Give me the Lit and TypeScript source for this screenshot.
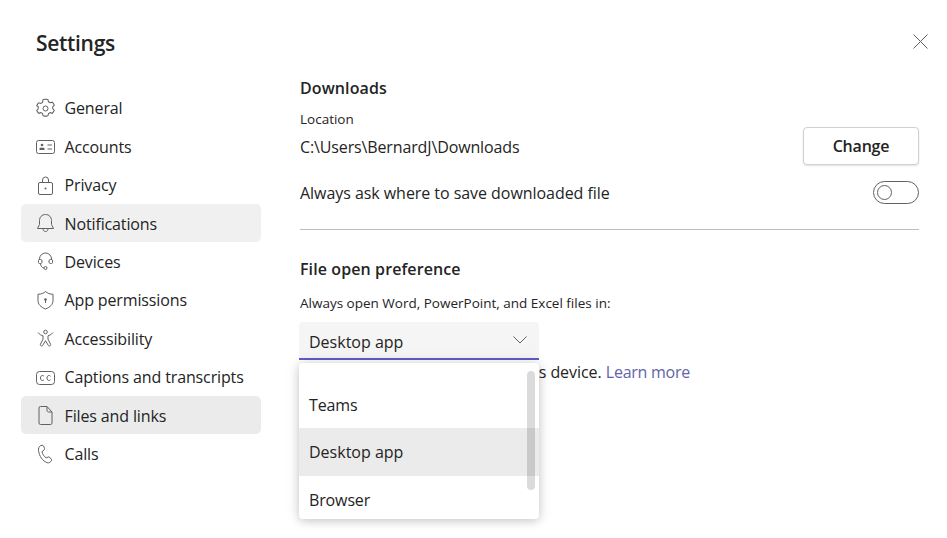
import { LitElement, html, css, svg } from "lit";
import { customElement } from "lit/decorators.js";

const navItems = [
  { label: "General", icon: svg`<path d="M8.6 2.6 10 2.2h1.900l1.400.4.500 2 1.600.9 2-.6 1.100 1.300.8 1.500-1.400 1.500v2l1.400 1.400-.8 1.600-1.100 1.300-2-.6-1.600.9-.5 2-1.400.4H10l-1.400-.4-.5-2-1.600-.9-2 .6-1.100-1.300-.8-1.600 1.400-1.400v-2L2.600 8.300l.8-1.500 1.100-1.300 2 .6 1.600-.9z" transform="translate(-1 -1) scale(1.05)"/><circle cx="10.500" cy="10.500" r="2.500"/>` },
  { label: "Accounts", icon: svg`<rect x="1.500" y="4.500" width="18" height="13" rx="2"/><circle cx="7" cy="9" r="1.300" fill="#616161" stroke="none"/><path d="M4.500 14v-1.200c0-.6.400-1 1-1h3c.6 0 1 .4 1 1V14z" fill="#616161" stroke="none"/><path d="M12.500 9h4.500M12.500 13h4.500"/>` },
  { label: "Privacy", icon: svg`<rect x="3.500" y="7.500" width="14" height="12" rx="1.500"/><path d="M7.500 7.500V5a3 3 0 0 1 6 0v2.500"/><circle cx="10.500" cy="13.500" r="1" fill="#616161" stroke="none"/>` },
  { label: "Notifications", icon: svg`<path d="M10.500 1.500c-3.500 0-6 2.700-6 6v4l-2 4h16l-2-4v-4c0-3.300-2.500-6-6-6z"/><path d="M8 15.500c0 1.800 1 3 2.500 3s2.500-1.200 2.500-3"/>` },
  { label: "Devices", icon: svg`<path d="M4.500 9V8a6 6 0 0 1 12 0v1"/><path d="M4.500 8.500h1.200c.7 0 1.300.6 1.300 1.300v1.400c0 .7-.6 1.300-1.300 1.300H4.500c-.6 0-1-.4-1-1v-2c0-.6.400-1 1-1zM15.300 8.500h1.200c.6 0 1 .4 1 1v2c0 .6-.4 1-1 1h-1.200c-.7 0-1.300-.6-1.300-1.300V9.800c0-.7.600-1.300 1.300-1.300z"/><path d="M5.500 12.500c0 2 1.500 4.500 3.500 4.500"/><circle cx="10.500" cy="17" r="1.500"/>` },
  { label: "App permissions", icon: svg`<path d="M10.500 1.500c2 1.800 4.500 2.700 7.500 2.800v6.200c0 3.800-2.500 6.500-7.500 8.500-5-2-7.500-4.700-7.500-8.500V4.300c3-.1 5.500-1 7.500-2.800z"/><circle cx="10.500" cy="9.500" r="1.300" fill="#616161" stroke="none"/><path d="M10.500 10v3"/>` },
  { label: "Accessibility", icon: svg`<circle cx="10.500" cy="4" r="1.800"/><path d="M3 4.500c1.500 2 3.700 3 5 3.300v3.400L5.500 16c-.8 1.800 1.400 2.800 2.300 1.200l2.700-4.500 2.700 4.500c.9 1.600 3.100.6 2.300-1.200L13 11.200V7.800c1.300-.3 3.500-1.300 5-3.300"/>` },
  { label: "Captions and transcripts", icon: svg`<rect x="1.500" y="4.500" width="18" height="13" rx="3"/><path d="M9 9.300c-.5-.6-1-.8-1.600-.8-1.100 0-1.900 1-1.900 2.500s.8 2.500 1.900 2.500c.6 0 1.100-.2 1.600-.8M15.500 9.300c-.5-.6-1-.8-1.600-.8-1.100 0-1.900 1-1.900 2.500s.8 2.500 1.900 2.500c.6 0 1.100-.2 1.600-.8"/>` },
  { label: "Files and links", icon: svg`<path d="M5.500 1.500h6.500l5 5.500v11a1.500 1.500 0 0 1-1.500 1.500h-10A1.500 1.500 0 0 1 4 18V3a1.500 1.500 0 0 1 1.500-1.500z"/><path d="M12 1.500V5.500c0 .8.700 1.500 1.500 1.500H17"/>` },
  { label: "Calls", icon: svg`<path d="M5.300 2.800 7 2.300c.7-.2 1.300.1 1.600.8l.9 2.300c.2.600.1 1.200-.4 1.600L7 8.700c.4 2.400 2 4.800 4.200 6.200l1.900-.9c.6-.3 1.200-.2 1.600.3l1.700 2c.4.500.4 1.200-.1 1.700l-1.300 1.200c-.8.700-1.900.9-2.900.5C7.500 17.800 4.300 13.300 3.500 7.500c-.2-2 .5-4 1.800-4.700z"/>` },
];

@customElement("app-root")
export class AppRoot extends LitElement {
  static styles = css`
    :host {
      display: block;
      width: 947px;
      height: 538px;
      background: #fff;
      color: #242424;
      font-family: "Open Sans", sans-serif;
      font-size: 16px;
      letter-spacing: -0.13px;
      overflow: hidden;
    }
    .page {
      display: flex;
      height: 100%;
      box-sizing: border-box;
      padding-left: 21px;
      position: relative;
    }
    .side {
      width: 240px;
      flex: none;
      padding-top: 27px;
    }
    h1 {
      margin: 0 0 0 15px;
      font-size: 21px;
      font-weight: 600;
      line-height: 32px;
      letter-spacing: -0.3px;
    }
    nav {
      margin-top: 29.900px;
      display: flex;
      flex-direction: column;
      gap: 0.400px;
    }
    .item {
      display: flex;
      align-items: center;
      box-sizing: border-box;
      height: 38px;
      border-radius: 5px;
      padding: 1px 0 0 13.500px;
      gap: 9px;
    }
    .item.on { background: #f0f0f0; }
    .item.files { background: #ebebeb; }
    .item svg {
      width: 21px;
      height: 21px;
      fill: none;
      stroke: #616161;
      stroke-width: 1;
      flex: none;
    }
    .main {
      width: 619px;
      margin-left: 39px;
      padding-top: 74px;
    }
    h2 {
      margin: 0;
      font-size: 16px;
      font-weight: 600;
      line-height: 28px;
      letter-spacing: 0.1px;
    }
    .small {
      font-size: 13.500px;
      line-height: 18px;
      letter-spacing: 0;
    }
    .loc { margin-top: 8px; }
    .row {
      display: flex;
      justify-content: space-between;
      align-items: center;
    }
    .path-row { height: 38px; margin-top: -1px; }
    .path-row span { position: relative; top: 1px; }
    .ask-row { height: 23px; margin-top: 16px; letter-spacing: -0.05px; }
    .btn {
      box-sizing: border-box;
      width: 116px;
      height: 38px;
      border: 1px solid #d1d1d1;
      border-radius: 4px;
      background: #fff;
      box-shadow: 0 1px 2px rgba(0, 0, 0, 0.12);
      font: 600 16px "Open Sans", sans-serif;
      color: #242424;
      letter-spacing: -0.2px;
    }
    .toggle {
      box-sizing: border-box;
      width: 46px;
      height: 23px;
      border: 1px solid #616161;
      border-radius: 12px;
      padding: 3px;
    }
    .toggle i {
      display: block;
      box-sizing: border-box;
      width: 15px;
      height: 15px;
      border: 1px solid #616161;
      border-radius: 50%;
    }
    hr {
      margin: 25px 0 0;
      border: 0;
      height: 1px;
      background: #bdbdbd;
    }
    .pref { margin-top: 25px; }
    .always { margin-top: 11px; }
    .select {
      box-sizing: border-box;
      width: 240px;
      height: 38px;
      margin: 10px 0 0 -1px;
      padding: 0 11px 0 10px;
      background: #f5f5f5;
      border-bottom: 2px solid #5b5fc7;
      border-radius: 4px 4px 0 0;
      display: flex;
      align-items: center;
      justify-content: space-between;
      letter-spacing: 0;
    }
    .select span { position: relative; top: 2px; }
    .select svg {
      width: 16px;
      height: 16px;
      fill: none;
      stroke: #616161;
    }
    .note {
      width: 390px;
      line-height: 24px;
      text-align: right;
      white-space: nowrap;
      letter-spacing: -0.05px;
    }
    .note a { color: #6264a7; letter-spacing: -0.25px; }
    .menu {
      position: absolute;
      left: 299px;
      top: 363px;
      box-sizing: border-box;
      width: 240px;
      height: 156px;
      padding-top: 17.400px;
      background: #fff;
      border-radius: 4px;
      box-shadow: 0 2px 8px rgba(0, 0, 0, 0.16), 0 0 16px rgba(0, 0, 0, 0.1);
    }
    .opt {
      box-sizing: border-box;
      height: 47.600px;
      display: flex;
      align-items: center;
      padding: 1px 0 0 10px;
    }
    .opt.hover { background: #ebebeb; letter-spacing: 0; }
    .thumb {
      position: absolute;
      left: 228px;
      top: 8px;
      width: 8px;
      height: 119px;
      border-radius: 4px;
      background: rgba(0, 0, 0, 0.14);
    }
    .close {
      position: absolute;
      left: 912.500px;
      top: 34px;
      width: 15px;
      height: 15px;
      fill: none;
      stroke: #616161;
    }
  `;

  render() {
    return html`
      <div class="page">
        <div class="side">
          <h1>Settings</h1>
          <nav>
            ${navItems.map(
              (n) => html`<div class="item ${n.label == "Notifications" ? "on" : ""} ${n.label == "Files and links" ? "files" : ""}">
                <svg viewBox="0 0 21 21">${n.icon}</svg>${n.label}
              </div>`
            )}
          </nav>
        </div>
        <div class="main">
          <h2>Downloads</h2>
          <div class="small loc">Location</div>
          <div class="row path-row">
            <span>C:\\Users\\BernardJ\\Downloads</span>
            <button class="btn">Change</button>
          </div>
          <div class="row ask-row">
            <span>Always ask where to save downloaded file</span>
            <div class="toggle"><i></i></div>
          </div>
          <hr />
          <h2 class="pref">File open preference</h2>
          <div class="small always">Always open Word, PowerPoint, and Excel files in:</div>
          <div class="select">
            <span>Desktop app</span>
            <svg viewBox="0 0 16 16"><path d="M1.500 4.500 8 11l6.500-6.500" /></svg>
          </div>
          <div class="note">Files will always open on this device. <a>Learn more</a></div>
        </div>
        <div class="menu">
          <div class="opt">Teams</div>
          <div class="opt hover">Desktop app</div>
          <div class="opt">Browser</div>
          <div class="thumb"></div>
        </div>
        <svg class="close" viewBox="0 0 15 15"><path d="M.5.5l14 14M14.500.5l-14 14" /></svg>
      </div>
    `;
  }
}
